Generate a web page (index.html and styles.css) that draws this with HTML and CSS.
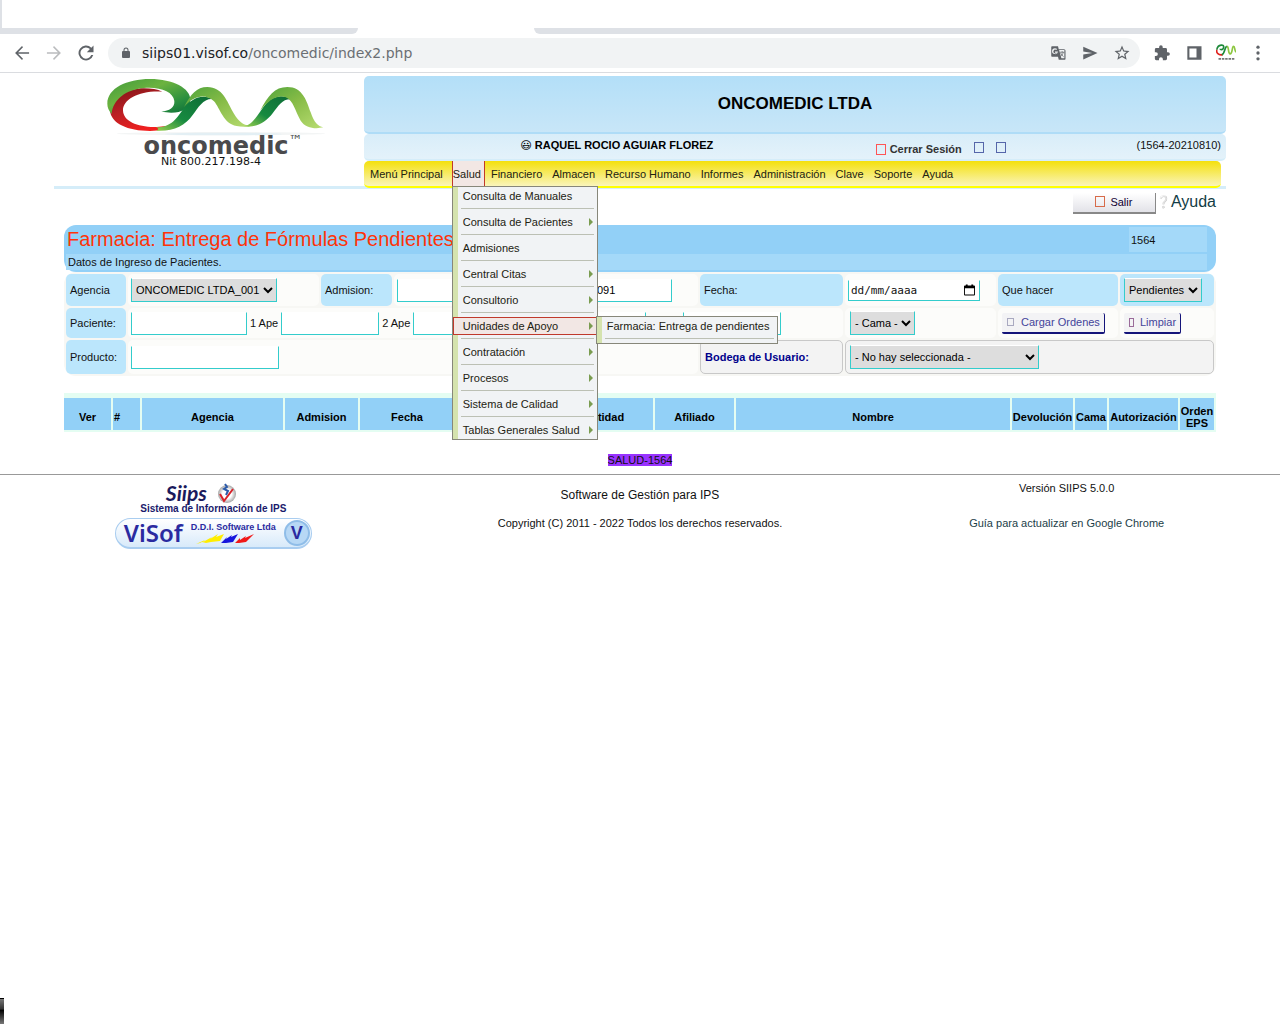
FILE: index.html
```html
<!DOCTYPE html>
<html lang="es">
<head>
    <meta charset="UTF-8">
    <meta name="viewport" content="width=device-width, initial-scale=1.0">
    <title>ONCOMEDIC LTDA</title>
    <link rel="stylesheet" href="styles.css">
</head>
<body>
    <div class="tabs"></div>
    <div class="tab-edge">
        <div class="edge-left"></div>
        <div class="edge-right"></div>
    </div>
    <div class="toolbar">
        <button class="icon" aria-label="Atrás"><svg viewBox="0 0 24 24"><path d="M20.500 11H7.300l5.900-5.900L12 3.700 3.700 12l8.300 8.300 1.200-1.400L7.300 13h13.200z"/></svg></button>
        <button class="icon disabled" aria-label="Adelante"><svg viewBox="0 0 24 24"><path d="M3.500 11h13.200l-5.900-5.900L12 3.700l8.300 8.300-8.300 8.300-1.200-1.400 5.900-5.900H3.500z"/></svg></button>
        <button class="icon" aria-label="Recargar"><svg viewBox="0 0 24 24"><path d="M18.400 5.600A9 9 0 1 0 20.700 14.500h-2.400A6.700 6.700 0 1 1 16.700 7.300L13 11h8V3z"/></svg></button>
        <div class="address">
            <svg class="lock" viewBox="0 0 24 24"><path d="M18 8h-1V6A5 5 0 0 0 7 6v2H6a2 2 0 0 0-2 2v10a2 2 0 0 0 2 2h12a2 2 0 0 0 2-2V10a2 2 0 0 0-2-2zM9 6a3 3 0 0 1 6 0v2H9z"/></svg>
            <span class="url">siips01.visof.co<span class="path">/oncomedic/index2.php</span></span>
            <button class="icon" aria-label="Traducir"><svg viewBox="0 0 24 24"><path fill-rule="evenodd" d="M4 3h8l1 4h7a2 2 0 0 1 2 2v11a1 1 0 0 1-1 1h-8l-1-4H4a1 1 0 0 1-1-1V4a1 1 0 0 1 1-1zm9.500 5l3 11h4V8zM8 5.500a4 4 0 1 0 4 4.500H8v1.500h2.300A2.500 2.500 0 1 1 9.700 8l1.100-1.200A4 4 0 0 0 8 5.500z"/><path d="M14.500 11h6M17.500 9.500V11M19 11c-.5 2.500-2 4.500-3.500 5.500M15.500 12c1 2 2.500 4 4 5" fill="none" stroke="#5f6368"/></svg></button>
            <button class="icon" aria-label="Compartir"><svg viewBox="0 0 24 24"><path d="M3 20.500L22 12 3 3.500V10l12 2-12 2z"/></svg></button>
            <button class="icon" aria-label="Favorito"><svg viewBox="0 0 24 24"><path d="M22 9.200l-7.200-.6L12 2 9.200 8.600 2 9.200l5.500 4.800-1.700 7L12 17.300l6.200 3.700-1.600-7zM12 15.400l-3.800 2.300 1-4.300-3.300-2.900 4.400-.4L12 6.100l1.700 4 4.400.4-3.300 2.900 1 4.300z"/></svg></button>
        </div>
        <button class="icon" aria-label="Extensiones"><svg viewBox="-2 -2 28 28"><path d="M20.500 11H19V7a2 2 0 0 0-2-2h-4V3.500a2.500 2.500 0 0 0-5 0V5H4a2 2 0 0 0-2 2v3.800h1.500a2.700 2.700 0 0 1 0 5.400H2V20a2 2 0 0 0 2 2h3.800v-1.500a2.700 2.700 0 0 1 5.400 0V22H17a2 2 0 0 0 2-2v-4h1.500a2.500 2.500 0 0 0 0-5z"/></svg></button>
        <button class="icon" aria-label="Panel lateral"><svg viewBox="0 0 24 24"><path fill-rule="evenodd" d="M4 4h17v16H4zM6.500 6.500v11H15v-11z"/></svg></button>
        <button class="icon" aria-label="Perfil"><svg viewBox="0 0 24 24"><path d="M8 14C3 15 0 12 1 8" fill="none" stroke="#e0201c" stroke-width="2"/><path d="M1 8C2 1 11 1 9 6c-1 3-4 2-4 1M7 14c4-1 3-9 6-10" fill="none" stroke="#1d8a3a" stroke-width="2"/><path d="M13 4c3 0 1 9 4 9s2-9 4-9 1 5 3 7" fill="none" stroke="#8cc63f" stroke-width="2"/><path d="M3 19h19" stroke="#777" stroke-width="2" stroke-dasharray="3 1"/></svg></button>
        <button class="icon" aria-label="Menú"><svg viewBox="0 0 24 24"><circle cx="12" cy="5" r="2"/><circle cx="12" cy="12" r="2"/><circle cx="12" cy="19" r="2"/></svg></button>
    </div>

    <header class="header">
        <div class="logo">
            <svg class="logo-mark" viewBox="165 15 660 180">
                <defs>
                    <linearGradient id="ring" x1="0" y1="0" x2="1" y2="1">
                        <stop offset="0" stop-color="#3f9a3c"/><stop offset=".4" stop-color="#6cb33f"/><stop offset=".75" stop-color="#2a8f3f"/><stop offset="1" stop-color="#0b6b38"/>
                    </linearGradient>
                    <linearGradient id="red" x1="0" y1="0" x2=".5" y2="1">
                        <stop offset="0" stop-color="#7d1416"/><stop offset=".5" stop-color="#b81f24"/><stop offset="1" stop-color="#f2201f"/>
                    </linearGradient>
                    <linearGradient id="up" x1="0" y1="1" x2="1" y2="0">
                        <stop offset="0" stop-color="#9bd04f"/><stop offset=".4" stop-color="#178a40"/><stop offset="1" stop-color="#0d6b36"/>
                    </linearGradient>
                    <linearGradient id="down" x1="0" y1="0" x2="1" y2="1">
                        <stop offset="0" stop-color="#4da33c"/><stop offset=".45" stop-color="#86bb46"/><stop offset="1" stop-color="#b9dd72"/>
                    </linearGradient>
                </defs>
                <ellipse cx="513" cy="188" rx="312" ry="5" fill="#f3f5f5"/>
                <ellipse cx="520" cy="189" rx="175" ry="4" fill="#e3eff4"/>
                <path fill="url(#red)" d="M180 118C184 78 230 52 282 52c22 0 40 3 55 10-68-4-118 22-118 56 0 34 48 52 101 50 20-1 38-4 52-8-18 13-42 20-72 20-66 0-118-22-120-62z"/>
                <path fill="url(#ring)" d="M172 98C172 52 230 24 300 24c70 0 121 28 121 62 0 30-42 48-87 35 24 0 41-12 39-31-3-28-43-43-91-39-54 4-94 36-97 78-9-10-13-20-13-31z"/>
                <path fill="url(#up)" d="M318 169c48 0 62-28 84-58 22-28 52-44 86-27-28-2-42 24-60 48-24 34-58 50-110 47 8-3 10-6 0-10z"/>
                <path fill="url(#down)" d="M402 108c20-38 38-60 70-60 46 0 58 42 80 80 14 25 34 40 58 34-12 6-34 6-50 3-40-6-50-54-68-74-24-24-62-18-90 17z"/>
                <path fill="url(#up)" d="M582 166c30-6 44-42 68-70 22-24 50-26 74-11-26-2-38 18-56 42-22 28-48 44-86 39z"/>
                <path fill="url(#down)" d="M630 120c24-46 44-72 82-72 46 0 58 42 70 76 10 30 22 42 38 45-24 6-54 2-68-20-18-30-20-58-44-70-26-8-50 6-78 41z"/>
            </svg>
            <div class="logo-name">oncomedic<sup>™</sup></div>
            <div class="logo-nit">Nit 800.217.198-4</div>
        </div>
        <div class="header-main">
            <h1>ONCOMEDIC LTDA</h1>
            <div class="user-bar">
                <strong class="user"><span class="face">😃</span> RAQUEL ROCIO AGUIAR FLOREZ</strong>
                <div class="session">
                    <i class="glyph red"></i><a href="#">Cerrar Sesión</a><i class="glyph blue"></i><i class="glyph blue"></i>
                </div>
                <span class="code">(1564-20210810)</span>
            </div>
            <nav class="menu">
                <a href="#">Menú Principal</a>
                <div class="menu-open">
                    <a href="#">Salud</a>
                    <ul class="dropdown">
                        <li><a href="#">Consulta de Manuales</a></li>
                        <li><a href="#" class="more">Consulta de Pacientes</a></li>
                        <li><a href="#">Admisiones</a></li>
                        <li><a href="#" class="more">Central Citas</a></li>
                        <li><a href="#" class="more">Consultorio</a></li>
                        <li class="active">
                            <a href="#" class="more">Unidades de Apoyo</a>
                            <ul class="dropdown submenu">
                                <li><a href="#">Farmacia: Entrega de pendientes</a></li>
                            </ul>
                        </li>
                        <li><a href="#" class="more">Contratación</a></li>
                        <li><a href="#" class="more">Procesos</a></li>
                        <li><a href="#" class="more">Sistema de Calidad</a></li>
                        <li><a href="#" class="more">Tablas Generales Salud</a></li>
                    </ul>
                </div>
                <a href="#">Financiero</a>
                <a href="#">Almacen</a>
                <a href="#">Recurso Humano</a>
                <a href="#">Informes</a>
                <a href="#">Administración</a>
                <a href="#">Clave</a>
                <a href="#">Soporte</a>
                <a href="#">Ayuda</a>
            </nav>
        </div>
    </header>

    <main class="content">
        <div class="actions">
            <button class="exit"><i class="glyph orange"></i>Salir</button>
            <a class="help" href="#"><span class="question">❔</span> Ayuda</a>
        </div>

        <div class="panel-title">
            <h2>Farmacia: Entrega de Fórmulas Pendientes</h2>
            <div class="panel-code">1564</div>
            <div class="panel-sub">Datos de Ingreso de Pacientes.</div>
        </div>

        <form class="filters">
            <label class="label" for="agencia">Agencia</label>
            <div class="field">
                <select id="agencia"><option>ONCOMEDIC LTDA_001</option></select>
            </div>
            <label class="label" for="admision">Admision:</label>
            <div class="field">
                <input type="text" id="admision" class="grow">
                <input type="text" class="short" value="091" aria-label="Número">
            </div>
            <label class="label" for="fecha">Fecha:</label>
            <div class="field">
                <div class="date">
                    <input type="text" id="fecha" placeholder="dd/mm/aaaa">
                    <svg viewBox="0 0 12 12"><path fill-rule="evenodd" d="M2 0h2v1h4V0h2v1h1a1 1 0 0 1 1 1v9a1 1 0 0 1-1 1H1a1 1 0 0 1-1-1V2a1 1 0 0 1 1-1h1zM1 4v7h10V4z"/></svg>
                </div>
            </div>
            <label class="label" for="hacer">Que hacer</label>
            <div class="field label-field">
                <select id="hacer"><option>Pendientes</option></select>
            </div>

            <label class="label" for="paciente">Paciente:</label>
            <div class="field names">
                <input type="text" id="paciente" class="doc">
                <label for="ape1">1 Ape</label>
                <input type="text" id="ape1" class="name">
                <label for="ape2">2 Ape</label>
                <input type="text" id="ape2" class="name">
                <input type="text" class="name first" aria-label="1 Nom">
                <input type="text" class="name first" aria-label="2 Nom">
            </div>
            <div class="field room">
                <select aria-label="Cama"><option>- Cama -</option></select>
            </div>
            <div class="field">
                <button type="button" class="btn"><i class="glyph small"></i>Cargar Ordenes</button>
            </div>
            <div class="field">
                <button type="reset" class="btn"><i class="glyph thin"></i>Limpiar</button>
            </div>

            <label class="label" for="producto">Producto:</label>
            <div class="field product">
                <input type="text" id="producto" class="wide">
            </div>
            <label class="label store" for="bodega">Bodega de Usuario:</label>
            <div class="field store store-field">
                <select id="bodega" class="store-select"><option>- No hay seleccionada -</option></select>
            </div>
        </form>

        <table class="results">
            <colgroup>
                <col class="c-ver"><col class="c-num"><col class="c-agencia"><col class="c-admision"><col class="c-fecha"><col class="c-blank"><col class="c-entidad"><col class="c-afiliado"><col><col class="c-dev"><col class="c-cama"><col class="c-aut"><col class="c-orden">
            </colgroup>
            <thead>
                <tr>
                    <th>Ver</th>
                    <th class="left">#</th>
                    <th>Agencia</th>
                    <th>Admision</th>
                    <th>Fecha</th>
                    <th></th>
                    <th>Entidad</th>
                    <th>Afiliado</th>
                    <th>Nombre</th>
                    <th>Devolución</th>
                    <th>Cama</th>
                    <th>Autorización</th>
                    <th>Orden EPS</th>
                </tr>
            </thead>
        </table>
        <div class="module"><span>SALUD-1564</span></div>
    </main>

    <footer class="footer">
        <div class="brands">
            <div class="siips">
                <span class="siips-name">Siips</span>
                <svg viewBox="0 0 22 22"><defs><radialGradient id="ball"><stop offset=".5" stop-color="#fff"/><stop offset="1" stop-color="#a5a5a5"/></radialGradient></defs><circle cx="12" cy="12" r="9" fill="url(#ball)"/><path d="M5 12l4 7L18 7" fill="none" stroke="#d8232a" stroke-width="2"/><path d="M10 2l2 3-3 2 4 2-2 4" fill="none" stroke="#2c5aa8" stroke-width="2"/></svg>
            </div>
            <div class="siips-sub">Sistema de Información de IPS</div>
            <div class="visof">
                <span class="visof-name">ViSof</span>
                <div class="visof-mid">
                    <span>D.D.I. Software Ltda</span>
                    <svg viewBox="0 0 60 12"><path fill="#ffee00" d="M0 11l9-4-2 2 9-5-2 2 8-5-2 3 8-3-4 7-9 1-5 1-4-1-2 1z"/><path fill="#1616dd" d="M25 10l6-6-1 2 6-4-1 2 7-3-5 8-7 1z"/><path fill="#f01818" d="M39 10l5-5v2l6-4-1 2 9-4-8 8-7 1z"/></svg>
                </div>
                <span class="visof-badge">V</span>
            </div>
        </div>
        <div class="legal">
            <p class="product-name">Software de Gestión para IPS</p>
            <p>Copyright (C) 2011 - 2022 Todos los derechos reservados.</p>
        </div>
        <div class="version">
            <p>Versión SIIPS 5.0.0</p>
            <p><a href="#">Guía para actualizar en Google Chrome</a></p>
        </div>
    </footer>
    <div class="corner"></div>
</body>
</html>
```
FILE: styles.css
```css
* {
    box-sizing: border-box;
}
body {
    margin: 0;
    min-height: 100vh;
    display: flex;
    flex-direction: column;
    background: #fff;
    color: #111;
    font-family: "Liberation Sans", Arial, sans-serif;
    font-size: 11px;
    line-height: 12px;
}
a {
    color: inherit;
    text-decoration: none;
}
button,
input,
select {
    font-family: inherit;
    font-size: 11px;
    margin: 0;
}

/* browser bar */
.tabs {
    height: 28px;
    border-left: 2px solid #dee1e6;
}
.tab-edge {
    display: flex;
    justify-content: space-between;
    height: 6px;
}
.edge-left {
    width: 358px;
    background: #dee1e6;
    border-bottom-right-radius: 6px;
}
.edge-right {
    width: calc(100% - 534px);
    background: #dee1e6;
    border-bottom-left-radius: 6px;
}
.toolbar {
    display: flex;
    align-items: center;
    gap: 12px;
    height: 39px;
    padding: 0 12px;
    border-bottom: 1px solid #dadce0;
}
.icon {
    width: 20px;
    height: 20px;
    padding: 0;
    border: 0;
    background: none;
    fill: #5f6368;
}
.icon svg {
    display: block;
    width: 20px;
    height: 20px;
}
.icon.disabled {
    fill: #babcbe;
}
.address .icon svg {
    width: 18px;
    height: 18px;
    margin: 0 auto;
}
.address {
    flex: 1;
    display: flex;
    align-items: center;
    gap: 12px;
    height: 30px;
    padding: 0 8px 0 12px;
    border-radius: 15px;
    background: #f1f3f4;
}
.lock {
    width: 12px;
    height: 12px;
    fill: #5f6368;
}
.url {
    flex: 1;
    margin-left: -2px;
    font-family: "DejaVu Sans", sans-serif;
    font-size: 14px;
    line-height: 20px;
    color: #202124;
}
.path {
    color: #6b6f73;
}

/* header */
.header {
    display: flex;
    margin: 0 54px;
    padding-top: 3px;
    border-bottom: 3px solid #d5edf9;
}
.logo {
    width: 310px;
    padding-left: 51px;
}
.logo-mark {
    display: block;
    width: 220px;
    height: 60px;
}
.logo-name {
    width: 236px;
    font-family: "DejaVu Sans", sans-serif;
    font-size: 24px;
    font-weight: bold;
    line-height: 20px;
    text-align: center;
    color: #4a4a4c;
}
.logo-name sup {
    font-size: 14px;
    font-weight: normal;
    line-height: 0;
}
.logo-nit {
    width: 212px;
    font-family: "DejaVu Sans", sans-serif;
    text-align: center;
    line-height: 12px;
}
.header-main {
    flex: 1;
}
h1 {
    margin: 0;
    height: 58px;
    border-bottom: 2px solid #afdcf7;
    border-radius: 5px;
    background: linear-gradient(#b3dff8, #c8e6f8);
    font-size: 17px;
    line-height: 56px;
    text-align: center;
    color: #000;
}
.user-bar {
    display: grid;
    grid-template-columns: 59% 1fr auto;
    height: 27px;
    padding: 5px 5px 0 0;
    border-bottom: 2px solid #d5edf9;
    border-radius: 5px;
    background: linear-gradient(#d8edf9, #e4f2fa);
}
.user {
    text-align: center;
    color: #000;
}
.face,
.question {
    font-family: "DejaVu Sans", sans-serif;
    font-weight: normal;
}
.session {
    display: flex;
    align-items: center;
    height: 20px;
    padding-left: 2px;
    font-weight: bold;
    color: #333;
}
.glyph {
    display: inline-block;
    width: 10px;
    height: 11px;
    border: 1px solid;
}
.session .glyph {
    margin-bottom: 3px;
}
.glyph.red {
    margin: 0 4px;
    color: #f55;
}
.glyph.blue {
    margin-left: 12px;
    color: #56a;
}
.glyph.orange {
    margin-right: 5px;
    color: #d76b4a;
}
.glyph.small {
    width: 7px;
    height: 8px;
    margin-right: 7px;
    color: #a9a9c0;
}
.glyph.thin {
    width: 5px;
    height: 9px;
    margin-right: 6px;
    color: #9a6b9a;
}
.menu {
    display: flex;
    gap: 5px;
    height: 27px;
    margin: 0 5px -2px 0;
    padding-left: 5px;
    border-bottom: 2px solid #ff0;
    border-radius: 5px;
    background: linear-gradient(#f4e00c, #faf5bb);
    color: #221;
}
.menu > a,
.menu-open > a {
    display: block;
    padding-right: 3px;
    border: solid transparent;
    border-width: 0 1px;
    line-height: 26px;
}
.menu-open {
    position: relative;
}
.menu-open > a {
    height: 25px;
    border-color: #c0392b;
    background: #f2e7e4;
}
.dropdown {
    position: absolute;
    z-index: 2;
    top: 25px;
    left: 0;
    width: 146px;
    margin: 0;
    padding: 0;
    list-style: none;
    border: 1px solid #87877a;
    background: linear-gradient(to right, #d5e3ae 5px, #f1f3f5 5px);
}
.dropdown li {
    position: relative;
}
.dropdown li::after {
    content: "";
    display: block;
    height: 1px;
    margin: 3px 3px 4px 8px;
    background: #bcc0b4;
}
.dropdown > li:last-child::after {
    display: none;
}
.dropdown li > a {
    display: block;
    height: 18px;
    padding-left: 9px;
    border: 1px solid transparent;
    border-right: 0;
    line-height: 16px;
    white-space: nowrap;
}
.dropdown .active > a {
    border-color: #c0392b;
    background: #f2e7e4;
}
.dropdown li > .more {
    display: flex;
    justify-content: space-between;
    align-items: center;
    padding-right: 4px;
}
.dropdown .more::after {
    content: "";
    border: 4px solid transparent;
    border-left-color: #7a9c50;
    border-right: 0;
}
.dropdown.submenu {
    top: -1px;
    left: 143px;
    width: 182px;
}
.dropdown.submenu > li:last-child::after {
    display: block;
}

/* content */
.content {
    margin: 0 64px;
}
.actions {
    display: flex;
    justify-content: flex-end;
    align-items: center;
    height: 25px;
    padding-top: 4px;
}
.exit {
    display: flex;
    align-items: center;
    justify-content: center;
    width: 83px;
    height: 21px;
    padding: 0 0 2px;
    border: solid #888;
    border-width: 0 1px 2px 0;
    background: linear-gradient(#fff, #e2e2e8);
    color: #103;
}
.help {
    display: flex;
    align-items: center;
    font-size: 16px;
    line-height: 16px;
    padding-bottom: 4px;
    color: #123c46;
}
.question {
    font-size: 12px;
    color: #567;
}
.panel-title {
    display: grid;
    grid-template-columns: 1fr 78px;
    grid-template-rows: 25px 16px;
    gap: 2px;
    margin-top: 11px;
    padding: 2px 9px 2px 2px;
    border-radius: 12px;
    background: #92d0f7;
}
h2 {
    margin: 0;
    padding-left: 1px;
    font-size: 20px;
    font-weight: normal;
    line-height: 25px;
    color: #ff3308;
}
.panel-code {
    padding-left: 2px;
    background: #a4d9f9;
    line-height: 26px;
}
.panel-sub {
    grid-column: span 2;
    padding-left: 2px;
    background: #a4d9f9;
    line-height: 16px;
}
.filters {
    display: grid;
    grid-template-columns:
        minmax(0, 60fr) minmax(0, 191fr) minmax(0, 71fr) minmax(0, 304fr)
        minmax(0, 143fr) minmax(0, 151fr) minmax(0, 120fr) minmax(0, 94fr);
    grid-template-rows: 32px 30px 34px;
    gap: 2px;
    padding: 2px;
    border-radius: 12px;
    background: #f7f7f4;
}
.label,
.field {
    display: flex;
    align-items: center;
    border-radius: 5px;
}
.label {
    padding-left: 4px;
    background: #bbe6fc;
}
.field {
    gap: 3px;
    padding: 0 3px;
    background: #fcfcfa;
    white-space: nowrap;
}
.names {
    grid-column: span 4;
}
.product {
    grid-column: span 3;
}
.label-field {
    padding-left: 4px;
    background: #bbe6fc;
}
.store {
    border: 1px solid #c8c8c8;
    background: #f3f3f3;
    color: #00008b;
    font-weight: bold;
}
.store-field {
    grid-column: span 3;
}
.room {
    padding-left: 5px;
}
.field input {
    height: 23px;
    padding: 1px 2px;
    border: 1px solid #3cc;
    border-top-color: #fff;
    background: #fff;
}
.field .grow {
    flex: 1;
    min-width: 0;
}
.field .short {
    width: 78px;
    margin-right: 23px;
}
.doc {
    width: 116px;
}
.name {
    width: 98px;
}
.field .first {
    margin-left: 34px;
}
.wide {
    width: 148px;
}
.field select {
    height: 24px;
    border: 1px solid #3cc;
    border-top-color: #fff;
    border-radius: 0;
    background: #ddd;
    color: #000;
}
.field .store-select {
    width: 189px;
    margin-left: 1px;
}
.date {
    display: flex;
    align-items: center;
    width: 132px;
    height: 21px;
    padding-right: 4px;
    border: 1px solid #3cc;
    border-top-color: #fff;
    background: #fff;
}
.date input {
    flex: 1;
    min-width: 0;
    height: 18px;
    border: 0;
    font-family: "DejaVu Sans Mono", monospace;
}
.date input::placeholder {
    color: #111;
}
.date svg {
    width: 11px;
    height: 12px;
}
.btn {
    display: flex;
    align-items: center;
    height: 21px;
    margin-left: 1px;
    padding: 0 4px 0 5px;
    border: solid #14147a;
    border-width: 0 1px 2px 0;
    border-radius: 2px;
    background: #f3f3f5;
    color: #44449a;
}

.results {
    width: 100%;
    margin-top: 17px;
    table-layout: fixed;
    border-spacing: 0;
    border: solid #e4fdf2;
    border-width: 5px 0 2px;
}
.results th {
    height: 32px;
    padding: 7px 0 1px;
    border-right: 2px solid #e4fdf2;
    background: #92d0f7;
    color: #000;
}
.results .left {
    padding-left: 1px;
    text-align: left;
}
.c-ver { width: 49px; }
.c-num { width: 29px; }
.c-agencia { width: 143px; }
.c-admision { width: 75px; }
.c-fecha { width: 96px; }
.c-blank { width: 99px; }
.c-entidad { width: 100px; }
.c-afiliado { width: 81px; }
.c-dev { width: 63px; }
.c-cama { width: 34px; }
.c-aut { width: 71px; }
.c-orden { width: 36px; }
.module {
    margin: 22px 0 8px;
    text-align: center;
}
.module span {
    background: #93f;
}

/* footer */
.footer {
    display: grid;
    grid-template-columns: repeat(3, 1fr);
    border-top: 1px solid #999;
    text-align: center;
}
.footer p {
    margin: 0;
}
.brands {
    display: flex;
    flex-direction: column;
    align-items: center;
    padding-top: 8px;
}
.siips {
    display: flex;
    align-items: center;
    gap: 8px;
    height: 20px;
    margin-right: 24px;
}
.siips-name {
    font-family: Lato, sans-serif;
    font-size: 21px;
    font-style: italic;
    font-weight: bold;
    color: #1a1a5c;
}
.siips svg {
    width: 22px;
    height: 22px;
}
.siips-sub {
    font-size: 10px;
    font-weight: bold;
    color: #1a1a6c;
}
.visof {
    display: flex;
    align-items: center;
    justify-content: space-between;
    width: 197px;
    height: 31px;
    margin-top: 3px;
    padding: 0 1px 0 8px;
    border: 1px solid #a9cdf0;
    border-bottom-width: 2px;
    border-radius: 16px;
    background: linear-gradient(#fff, #d8eafa);
    color: #2a2aa0;
}
.visof-name {
    font-family: "Noto Sans", sans-serif;
    font-size: 24px;
    font-weight: 600;
}
.visof-mid {
    font-size: 9px;
    font-weight: bold;
}
.visof-mid svg {
    display: block;
    width: 60px;
    height: 12px;
    margin-left: 5px;
}
.visof-badge {
    width: 26px;
    height: 26px;
    border: 2px solid #8fbde8;
    border-radius: 50%;
    background: #b7d8f5;
    font-size: 18px;
    font-weight: bold;
    line-height: 22px;
}
.product-name {
    padding: 14px 0 16px;
    font-size: 12px;
}
.version p:first-child {
    padding: 7px 0 23px;
}
.version a {
    color: #1c4048;
}
.corner {
    width: 4px;
    height: 26px;
    margin-top: auto;
    border-top: 1px solid #000;
    background: linear-gradient(#777, #333 40%, #000 45%, #222 60%, #777);
}
```
